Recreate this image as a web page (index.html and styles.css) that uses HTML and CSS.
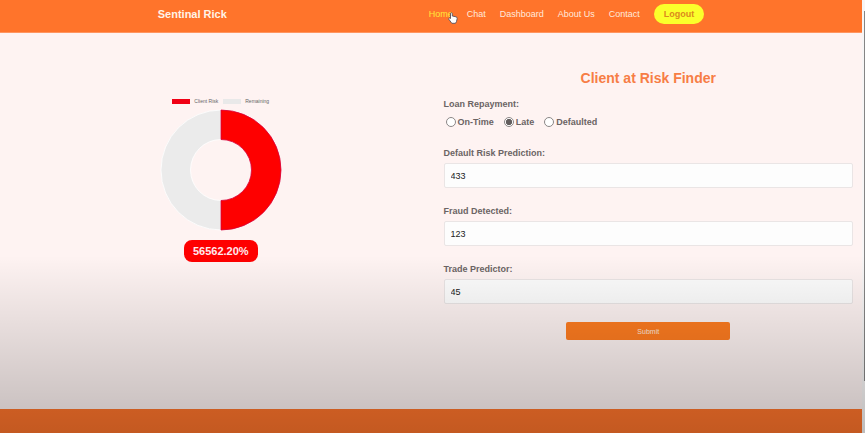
FILE: index.html
```html
<!DOCTYPE html>
<html lang="en">
<head>
<meta charset="utf-8">
<title>Sentinal Rick</title>
<link rel="stylesheet" href="styles.css">
</head>
<body>
<div class="page">
  <header class="header">
    <a class="brand" href="#">Sentinal Rick</a>
    <nav class="nav">
      <a class="nav-link active" href="#">Home</a>
      <a class="nav-link" href="#">Chat</a>
      <a class="nav-link" href="#">Dashboard</a>
      <a class="nav-link" href="#">About Us</a>
      <a class="nav-link" href="#">Contact</a>
      <button class="logout" type="button">Logout</button>
    </nav>
  </header>
  <main class="content">
    <section class="chart">
      <div class="legend">
        <span class="legend-item"><i class="swatch risk"></i>Client Risk</span>
        <span class="legend-item"><i class="swatch rest"></i>Remaining</span>
      </div>
      <svg class="donut" viewBox="0 0 122 122" aria-hidden="true">
        <path d="M61 1A60 60 0 0 0 61 121V91.500A30.500 30.500 0 0 1 61 30.500Z" fill="#ebebeb" stroke="#fff" stroke-width=".8"/>
        <path d="M61 1A60 60 0 0 1 61 121V91.500A30.500 30.500 0 0 0 61 30.500Z" fill="#fe0000" stroke="#d8003c" stroke-width=".8"/>
      </svg>
      <output class="score">56562.20%</output>
    </section>
    <form class="form">
      <h1 class="title">Client at Risk Finder</h1>
      <fieldset class="repayment">
        <legend class="label">Loan Repayment:</legend>
        <div class="options">
          <label class="option"><input class="radio" type="radio" name="loan">On-Time</label>
          <label class="option"><input class="radio" type="radio" name="loan" checked>Late</label>
          <label class="option"><input class="radio" type="radio" name="loan">Defaulted</label>
        </div>
      </fieldset>
      <div class="field">
        <label class="label" for="risk">Default Risk Prediction:</label>
        <input class="input" id="risk" type="text" value="433">
      </div>
      <div class="field">
        <label class="label" for="fraud">Fraud Detected:</label>
        <input class="input" id="fraud" type="text" value="123">
      </div>
      <div class="field">
        <label class="label" for="trade">Trade Predictor:</label>
        <input class="input" id="trade" type="text" value="45">
      </div>
      <button class="submit" type="button">Submit</button>
    </form>
  </main>
  <footer class="footer"></footer>
</div>
<div class="scrollbar"><div class="thumb"></div></div>
<div class="shade"></div>
<svg class="cursor" viewBox="0 0 10 12" aria-hidden="true">
  <path d="M2.500 1.200Q3.500.2 4.300 1.300V4L8 4.800Q9.300 5.200 9.200 6.500L8.500 9.500 7.500 11.300H3.800L1 7.500Q.3 6.300 1.500 5.900L2.500 6.500Z" fill="#fff" stroke="#59505c" stroke-width=".9" stroke-linejoin="round"/>
</svg>
</body>
</html>
```
FILE: styles.css
```css
* {
  box-sizing: border-box;
}

body {
  margin: 0;
  display: flex;
  min-height: 100vh;
  font-family: "Liberation Sans", Arial, sans-serif;
  font-size: 9px;
  line-height: 12px;
  background: #fef3f2;
}

.page {
  flex: 1;
  display: flex;
  flex-direction: column;
}

.header {
  display: flex;
  justify-content: space-between;
  align-items: center;
  padding: 4px 18.3% 8px;
  background: #ff742b;
  border-bottom: 1px solid #ff9560;
}

.brand {
  color: #fff3e6;
  font-size: 11px;
  font-weight: bold;
  text-decoration: none;
}

.nav {
  display: flex;
  align-items: center;
  gap: 14px;
}

.nav-link {
  color: #ffe9dc;
  text-decoration: none;
}

.nav-link.active {
  color: #ffe93a;
}

.logout {
  height: 20px;
  padding: 0 10px;
  border: 0;
  border-radius: 10px;
  background: #fbff2b;
  color: #dc8a1c;
  font: bold 9px "Liberation Sans", Arial, sans-serif;
}

.content {
  flex: 1;
  display: grid;
  grid-template-columns: 1fr 1fr;
  align-items: start;
  gap: 24px;
  padding: 36px 9px 0 10px;
}

.chart {
  display: flex;
  flex-direction: column;
  align-items: center;
  padding: 29px 0 0 12px;
}

.legend {
  display: flex;
  gap: 5px;
  color: #666;
  font-size: 5px;
  line-height: 6px;
}

.legend-item {
  display: flex;
  align-items: center;
  gap: 4px;
}

.swatch {
  width: 18px;
  height: 5px;
}

.risk {
  background: #f00014;
}

.rest {
  background: #e9e9e9;
}

.donut {
  width: 122px;
  height: 122px;
  margin-top: 5px;
}

.score {
  margin-top: 9px;
  padding: 5px 9px;
  border-radius: 8px;
  background: #fe0000;
  color: #ffe9ee;
  font-size: 11px;
  font-weight: bold;
}

.form {
  display: flex;
  flex-direction: column;
}

.title {
  margin: 0 0 11px;
  color: #f77d45;
  font-size: 14px;
  line-height: 18px;
  text-align: center;
}

.label,
.option {
  color: #6b6464;
  font-weight: bold;
}

.repayment {
  margin: 0 0 19px;
  padding: 0;
  border: 0;
}

.repayment .label {
  padding: 0;
}

.options {
  display: flex;
  gap: 10px;
  padding: 6px 2px 0;
}

.option {
  display: flex;
  align-items: center;
  gap: 2px;
}

.radio {
  appearance: none;
  width: 10px;
  height: 10px;
  margin: 0;
  border: 1px solid #8b8787;
  border-radius: 50%;
  background: #fff;
}

.radio:checked {
  background: radial-gradient(circle, #625d5d 50%, #fff 60%);
}

.field {
  display: flex;
  flex-direction: column;
  gap: 4px;
  margin-bottom: 17px;
}

.input {
  width: 100%;
  height: 25px;
  padding: 0 6px;
  border: 1px solid #eae5e5;
  border-radius: 2px;
  background: #fdfdfd;
  color: #222;
  font: 9px "Liberation Sans", Arial, sans-serif;
}

.submit {
  align-self: center;
  width: 40%;
  height: 18px;
  margin-top: 1px;
  border: 0;
  border-radius: 2px;
  background: #ff7c20;
  color: #ffe9dc;
  font: 7px "Liberation Sans", Arial, sans-serif;
}

.footer {
  height: 24px;
  background: #ff742b;
}

.scrollbar {
  width: 3px;
  padding: 11px 0 52px 2px;
  background: #f7f5f5;
  display: flex;
}

.thumb {
  flex: 1;
  background: #858585;
}

.shade {
  position: absolute;
  inset: 59% 0 0;
  background: linear-gradient(transparent, rgba(0, 0, 0, 0.23));
  pointer-events: none;
}

.cursor {
  position: absolute;
  left: 448px;
  top: 12px;
  width: 10px;
  height: 12px;
}
```
